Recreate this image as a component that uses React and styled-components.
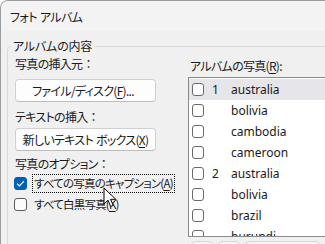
import React from 'react';
import styled, { createGlobalStyle } from 'styled-components';

const GlobalStyle = createGlobalStyle`
  html, body { margin: 0; padding: 0; background: #ffffff; }
  body {
    font-family: "Noto Sans CJK JP", "Noto Sans", sans-serif;
    font-size: 12px;
    color: #1a1a1a;
  }
`;

const jp = `
  font-feature-settings: "palt";
  white-space: nowrap;
`;

const Window = styled.div`
  position: relative;
  width: 324px;
  height: 243px;
  overflow: hidden;
  background: #f0f0f0;
  border-top: 1px solid #9c9c9c;
  border-left: 1px solid #9c9c9c;
  border-top-left-radius: 8px;
`;

const TitleBar = styled.div`
  height: 30px;
  display: flex;
  align-items: center;
  padding-left: 9px;
  background: #f3f3f3;
  ${jp}
  letter-spacing: -0.6px;
  word-spacing: 1px;
`;

const Content = styled.div`
  padding: 8px 0 0 6px;
`;

const Group = styled.fieldset`
  margin: 0;
  padding: 0 0 0 7px;
  width: 360px;
  height: 260px;
  border: 1px solid #d9d9d9;
  border-radius: 4px;
  box-sizing: border-box;
  display: grid;
  grid-template-columns: 173px 1fr;
`;

const Legend = styled.legend`
  margin-left: -4px;
  padding: 0 2px;
  line-height: 14px;
  ${jp}
  letter-spacing: -0.2px;
`;

const Column = styled.div`
  display: flex;
  flex-direction: column;
  align-items: flex-start;
  min-width: 0;
`;

const Label = styled.div`
  line-height: 14px;
  margin-top: ${p => p.$mt || 0}px;
  ${jp}
  letter-spacing: -0.7px;
`;

const Colon = styled.span`
  font-feature-settings: normal;
  letter-spacing: 0;
`;

const Button = styled.div`
  box-sizing: border-box;
  width: 141px;
  height: 23px;
  margin-top: ${p => p.$mt || 0}px;
  display: flex;
  align-items: center;
  justify-content: center;
  background: #fdfdfd;
  border: 1px solid #d0d0d0;
  border-bottom-color: #bcbcbc;
  border-radius: 4px;
  padding-right: ${p => p.$pr || 0}px;
  ${jp}
  letter-spacing: -0.7px;
  word-spacing: 1px;
`;

const U = styled.span`
  text-decoration: underline;
  text-underline-offset: 2px;
`;

const CheckRow = styled.div`
  display: flex;
  align-items: center;
  gap: 5px;
  white-space: nowrap;
  margin-top: ${p => p.$mt || 0}px;
  margin-left: -1px;
`;

const Box = styled.div`
  box-sizing: border-box;
  width: 13px;
  height: 13px;
  border-radius: 3px;
  display: flex;
  align-items: center;
  justify-content: center;
  flex-shrink: 0;
  background: ${p => (p.$checked ? '#005fb8' : '#fbfbfb')};
  border: 1px solid ${p => (p.$checked ? '#005fb8' : '#5c5c5c')};
`;

const CheckText = styled.span`
  font-size: 11.5px;
  line-height: 17px;
  padding: 0 1px;
  border: 1px dotted ${p => (p.$focus ? '#000' : 'transparent')};
  ${jp}
  letter-spacing: -0.8px;
`;

const ListLabel = styled.div`
  line-height: 14px;
  margin-top: 6px;
  margin-left: 2px;
  ${jp}
  letter-spacing: -0.7px;
`;

const ListBox = styled.div`
  box-sizing: border-box;
  margin-top: 4px;
  width: 200px;
  height: 160px;
  padding-top: 1px;
  background: #ffffff;
  border: 1px solid #8a8a8a;
  overflow: hidden;
`;

const Row = styled.div`
  height: 21px;
  flex-shrink: 0;
  display: flex;
  align-items: center;
  padding-left: 3px;
  background: ${p => (p.$hl ? '#e5e5ea' : 'transparent')};
  font-family: "Noto Sans", "Noto Sans CJK JP", sans-serif;
`;

const RowBox = styled.div`
  box-sizing: border-box;
  width: 12px;
  height: 13px;
  border: 1px solid #6a6a6a;
  border-radius: 3px;
  background: #ffffff;
  flex-shrink: 0;
`;

const Num = styled.span`
  width: 27px;
  padding-left: 8px;
  box-sizing: border-box;
  flex-shrink: 0;
`;

const ToolRow = styled.div`
  display: flex;
  gap: 5px;
  margin-top: 4px;
  margin-left: 3px;
`;

const ToolButton = styled.div`
  width: ${p => p.$w}px;
  height: 20px;
  border: 1px solid #d6d6d6;
  border-radius: 4px;
  background: #f5f5f5;
`;

const Cursor = styled.svg`
  position: absolute;
  left: 102px;
  top: 186px;
`;

const rows = [
  { n: '1', name: 'australia', hl: true },
  { n: '', name: 'bolivia' },
  { n: '', name: 'cambodia' },
  { n: '', name: 'cameroon' },
  { n: '2', name: 'australia' },
  { n: '', name: 'bolivia' },
  { n: '', name: 'brazil' },
  { n: '', name: 'burundi' },
];

export default function App() {
  return (
    <>
      <GlobalStyle />
      <Window>
        <TitleBar>フォト アルバム</TitleBar>
        <Content>
          <Group>
            <Legend>アルバムの内容</Legend>
            <Column>
              <Label $mt={4}>写真の挿入元<Colon>：</Colon></Label>
              <Button $mt={8} $pr={5}>ファイル/ディスク(<U>F</U>)...</Button>
              <Label $mt={8}>テキストの挿入<Colon>：</Colon></Label>
              <Button $mt={4}>新しいテキスト ボックス(<U>X</U>)</Button>
              <Label $mt={6}>写真のオプション<Colon>：</Colon></Label>
              <CheckRow $mt={3}>
                <Box $checked>
                  <svg width="9" height="7" viewBox="0 0 9 7">
                    <path d="M1 3.6 L3.4 6 L8 1.2" fill="none" stroke="#fff" strokeWidth="1.2" />
                  </svg>
                </Box>
                <CheckText $focus>すべての写真のキャプション(<U>A</U>)</CheckText>
              </CheckRow>
              <CheckRow $mt={2}>
                <Box />
                <CheckText>すべて白黒写真(<U>K</U>)</CheckText>
              </CheckRow>
            </Column>
            <Column>
              <ListLabel>アルバムの写真(<U>R</U>):</ListLabel>
              <ListBox>
                {rows.map((r, i) => (
                  <Row key={i} $hl={r.hl}>
                    <RowBox />
                    <Num>{r.n}</Num>
                    <span>{r.name}</span>
                  </Row>
                ))}
              </ListBox>
              <ToolRow>
                <ToolButton $w={20} />
                <ToolButton $w={20} />
                <ToolButton $w={73} />
              </ToolRow>
            </Column>
          </Group>
        </Content>
        <Cursor width="14" height="22" viewBox="0 0 14 22">
          <path d="M1 1 L1 17 L5 13.2 L7.6 19.5 L10.2 18.4 L7.6 12.3 L12.8 12.3 Z" fill="#fff" stroke="#000" strokeWidth="1" strokeLinejoin="round" />
        </Cursor>
      </Window>
    </>
  );
}
